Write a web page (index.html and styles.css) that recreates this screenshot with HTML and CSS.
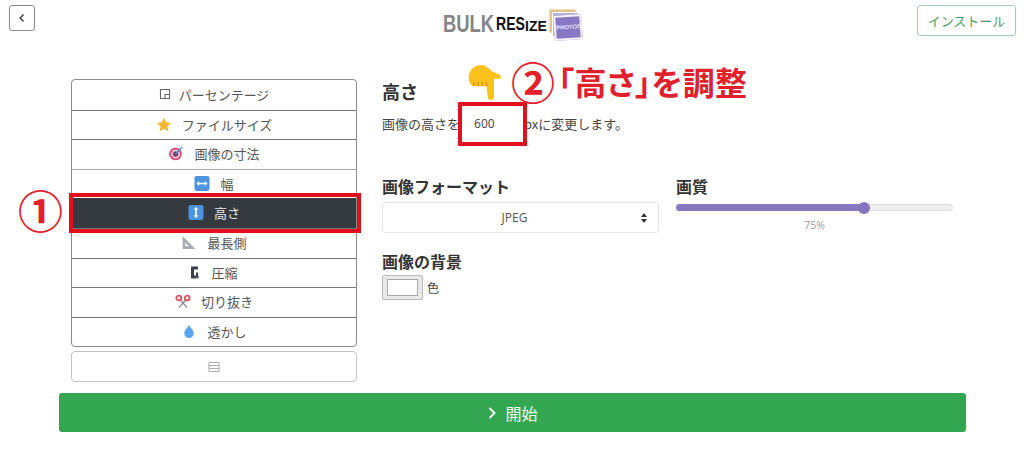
FILE: index.html
```html
<!DOCTYPE html>
<html lang="ja">
<head>
<meta charset="utf-8">
<title>Bulk Resize</title>
<link rel="stylesheet" href="styles.css">
</head>
<body>
<div class="page">
  <header class="topbar">
    <button class="back" aria-label="戻る"><svg width="10" height="12" viewBox="0 0 10 12"><path d="M6.500 2.500 3.200 6l3.300 3.500" fill="none" stroke="#444" stroke-width="1.500"/></svg></button>
    <div class="logo">
      <span class="logo-bulk">BULK</span><span class="logo-re">RES</span><span class="logo-ize">IZE</span>
      <span class="logo-stack"><span class="card c1"></span><span class="card c2"></span><span class="card c3">PHOTOS</span></span>
    </div>
    <button class="install">インストール</button>
  </header>

  <main class="main">
    <nav class="side">
      <ul class="menu">
        <li class="item"><svg class="ic ic-s" viewBox="0 0 12 12"><path d="M1.500 1.500h9v9h-9z M6 10.500V6.500h4.500" fill="none" stroke="#666" stroke-width="1.100"/></svg>パーセンテージ</li>
        <li class="item"><svg class="ic ic-w" viewBox="0 0 16 16"><path d="M8 .8l2.300 4.800 5.200.7-3.800 3.600 1 5.200L8 12.600l-4.700 2.500 1-5.200L.5 6.300l5.200-.7z" fill="#f0b630"/></svg>ファイルサイズ</li>
        <li class="item"><svg class="ic ic-w" viewBox="0 0 16 16"><circle cx="7.500" cy="8.500" r="6.800" fill="#d9557d"/><circle cx="7.500" cy="8.500" r="4.600" fill="#f6d5df"/><circle cx="7.500" cy="8.500" r="3" fill="#7a4a6e"/><path d="M8 8l5-5" stroke="#3d8fd8" stroke-width="1.400"/><path d="M11.500 3l3-2.500.5 2.500z" fill="#3d8fd8"/></svg>画像の寸法</li>
        <li class="item light"><svg class="ic ic-w" viewBox="0 0 14 14"><rect width="14" height="14" rx="2" fill="#4d94e0"/><path d="M1.800 7l2.500-2.300v1.500h5.400V4.700L12.200 7 9.700 9.300V7.800H4.300v1.500z" fill="#fff"/></svg>幅</li>
        <li class="item active"><svg class="ic ic-w" viewBox="0 0 14 14"><rect width="14" height="14" rx="2" fill="#4d94e0"/><path d="M7 1.800l2.300 2.500H7.800v5.400h1.500L7 12.200 4.700 9.700h1.500V4.300H4.700z" fill="#fff"/></svg>高さ</li>
        <li class="item"><svg class="ic ic-w" viewBox="0 0 14 14"><path d="M1 1l12 12H1z M3.500 7v3.500H7z" fill="#a8adb5" fill-rule="evenodd"/></svg>最長側</li>
        <li class="item"><svg class="ic ic-n" viewBox="0 0 10 14"><path d="M1 1h7v3H4v6h2v3H1z" fill="#3d4048"/><path d="M6 7h2v4h1.500L7 13.500 6 11z" fill="#3d4048"/></svg>圧縮</li>
        <li class="item"><svg class="ic ic-w" viewBox="0 0 16 14"><path d="M5 5l7 8M11 5l-7 8" stroke="#8a8f98" stroke-width="1.300"/><circle cx="3.800" cy="3.500" r="2.400" fill="none" stroke="#e05460" stroke-width="1.900"/><circle cx="12.200" cy="3.500" r="2.400" fill="none" stroke="#e05460" stroke-width="1.900"/></svg>切り抜き</li>
        <li class="item"><svg class="ic ic-w" viewBox="0 0 14 16"><path d="M7 1c2 3.500 5 5.500 5 9a5 5 0 0 1-10 0c0-3.500 3-5.500 5-9z" fill="#5aa5ec"/></svg>透かし</li>
      </ul>
      <button class="more"><svg width="12" height="12" viewBox="0 0 12 12"><path d="M1 1.500h10v9H1z M1 4.500h10 M1 7.500h10" fill="none" stroke="#aaa" stroke-width="1"/></svg></button>
    </nav>

    <section class="panel">
      <h2 class="title">高さ</h2>
      <div class="line">
        <span>画像の高さを</span><input class="num" value="600" aria-label="高さ"><span class="unit">pxに変更します。</span>
      </div>
      <div class="opts">
        <div class="opt">
          <h3 class="label">画像フォーマット</h3>
          <div class="select"><span>JPEG</span>
            <svg class="arrows" width="8" height="10" viewBox="0 0 8 10"><path d="M4 0l3 4H1zM4 10L1 6h6z" fill="#333"/></svg>
          </div>
        </div>
        <div class="opt">
          <h3 class="label">画質</h3>
          <div class="slider"><div class="fill"><span class="thumb"></span></div></div>
          <div class="pct">75%</div>
        </div>
      </div>
      <h3 class="label bg">画像の背景</h3>
      <div class="color"><span class="swatch"><span class="swatch-in"></span></span><span>色</span></div>
    </section>
  </main>

  <button class="start"><svg width="10" height="14" viewBox="0 0 10 14"><path d="M2.500 2l5 5-5 5" fill="none" stroke="#fff" stroke-width="1.800"/></svg>開始</button>

  <div class="mark mark-row"></div>
  <div class="mark mark-input"></div>
  <div class="note note-1">①</div>
  <div class="note note-2"><span class="circled">②</span><span class="phrase">「高さ」を調整</span></div>
  <svg class="hand" viewBox="0 0 34 34"><path d="M2 12C2 4 8 0 14 0c4 0 7 3 10 6l7 3c2 1 2 4 0 4h-5v17c0 4-6 4-6 0l-1-10H8c-4 0-6-4-6-8z" fill="#fcc21b"/><path d="M7 16v4M11 16v4M15 16v4M19 16v4" stroke="#c98a10" stroke-width="1"/></svg>
</div>
</body>
</html>
```
FILE: styles.css
```css
* { box-sizing: border-box; }
html, body { margin: 0; padding: 0; background: #fff; }
body {
  font-family: "Open Sans", "Noto Sans CJK JP", sans-serif;
  font-size: 13px;
  color: #444;
}
.page { position: relative; width: 1024px; height: 454px; overflow: hidden; }

.topbar {
  display: grid;
  grid-template-columns: 1fr auto 1fr;
  align-items: start;
  height: 79px;
  padding: 5px 8px 0 9px;
}
.back {
  width: 26px;
  height: 26px;
  padding: 0;
  display: flex;
  align-items: center;
  justify-content: center;
  background: #fff;
  border: 1px solid #8b8b8b;
  border-radius: 3px;
}
.install {
  justify-self: end;
  width: 99px;
  height: 31px;
  padding: 0;
  background: #fff;
  color: #4f9b68;
  border: 1px solid #a3cdb0;
  border-radius: 3px;
  font: 13px "Noto Sans CJK JP", sans-serif;
}
.logo {
  display: flex;
  align-items: center;
  width: 139px;
  height: 32px;
  margin-top: 3px;
  white-space: nowrap;
}
.logo-bulk, .logo-re { display: inline-block; transform-origin: left center; }
.logo-bulk { width: 53px; font: 900 23px/1 "Liberation Sans", sans-serif; color: #858585; transform: scaleX(.8); }
.logo-re { width: 29px; font: 700 18px/1 "Liberation Sans", sans-serif; color: #111; transform: scaleX(.78); }
.logo-ize { width: 21px; font: 700 14px/1 "Liberation Sans", sans-serif; color: #111; margin-top: 3px; }
.logo-stack { position: relative; display: block; width: 34px; height: 32px; margin-left: 2px; }
.card { position: absolute; display: block; }
.c1 { left: 1px; top: 1px; width: 27px; height: 24px; background: #e6c48e; border: 1px solid #f0dcb8; }
.c2 { left: 4px; top: 4px; width: 27px; height: 25px; background: #b5b5dc; border: 1px solid #fff; }
.c3 { left: 6px; top: 7px; width: 28px; height: 25px; background: #8878c4; border: 2px solid #f3f3f8; color: #e8e4f6; font: 700 6px/20px "Liberation Sans", sans-serif; text-align: center; overflow: hidden; transform: rotate(-4deg); }

.main { display: flex; align-items: flex-start; padding-left: 71px; height: 314px; }
.side { width: 286px; flex: none; }
.menu { list-style: none; margin: 0; padding: 0; border: 1px solid #8a8a8a; border-radius: 4px; overflow: hidden; }
.item {
  display: flex;
  align-items: center;
  justify-content: center;
  height: 29.600px;
  padding-bottom: 1px;
  border-top: 1px solid #777;
  color: #555;
  font-size: 13px;
  font-family: "Noto Sans CJK JP", sans-serif;
}
.item:first-child { border-top: 0; }
.item.light { border-top-color: #aaa; }
.item.active { background: #343a40; color: #e8e8e8; border-top: 0; }
.ic { flex: none; height: 15px; margin-right: 10px; }
.ic-s { width: 12px; height: 12px; margin-right: 8px; }
.ic-w { width: 16px; }
.ic-n { width: 10px; margin-right: 11px; }
.more {
  display: flex;
  align-items: center;
  justify-content: center;
  width: 100%;
  height: 31px;
  margin-top: 4px;
  padding: 0;
  background: #fff;
  border: 1px solid #c4c4c4;
  border-radius: 4px;
}

.panel { width: 571px; margin-left: 25px; font-family: "Noto Sans CJK JP", sans-serif; }
.title { margin: 0; font-size: 18px; line-height: 25px; font-weight: 700; color: #333; }
.line { display: flex; align-items: center; height: 38px; font-size: 13px; color: #444; }
.num {
  width: 65px;
  height: 34px;
  padding: 0 14px;
  border: 0;
  background: #fff;
  margin: 0;
  font: 12px "Open Sans", sans-serif;
  color: #444;
}
.unit { margin-left: -1px; }
.opts { display: grid; grid-template-columns: 277px 277px; column-gap: 17px; margin-top: 33px; }
.label { margin: 0; font-size: 16px; line-height: 22px; font-weight: 700; color: #333; }
.opt .label { margin-bottom: 5px; }
.select {
  position: relative;
  height: 31px;
  display: flex;
  align-items: center;
  justify-content: center;
  padding-right: 12px;
  border: 1px solid #e6e6e6;
  border-radius: 3px;
  font: 12px "Open Sans", sans-serif;
  color: #555;
}
.arrows { position: absolute; right: 10px; top: 10px; }
.slider { position: relative; height: 7px; margin-top: 7px; border: 1px solid #ddd; background: #eee; border-radius: 4px; }
.fill { position: relative; width: 188px; height: 7px; margin: -1px; background: #8878c0; border-radius: 4px; }
.thumb { position: absolute; right: -6px; top: -2px; width: 12px; height: 12px; border-radius: 50%; background: #8474bd; }
.pct { margin-top: 7px; text-align: center; font: 10.500px/14px "Open Sans", sans-serif; color: #999; }
.bg { margin-top: 17px; }
.color { display: flex; align-items: center; gap: 4px; margin-top: 3px; font-size: 12px; color: #444; }
.swatch { display: block; width: 41px; height: 25px; padding: 3px 4px; background: #e9e9e9; border: 1px solid #bbb; border-radius: 2px; }
.swatch-in { display: block; width: 100%; height: 100%; background: #fff; border: 1px solid #aaa; }

.start {
  display: flex;
  align-items: center;
  justify-content: center;
  gap: 8px;
  width: 907px;
  height: 39px;
  margin-left: 59px;
  padding: 0;
  background: #33a652;
  color: #f2fff5;
  border: 0;
  border-radius: 3px;
  font: 16px "Noto Sans CJK JP", sans-serif;
}

.mark { position: absolute; border: 4px solid #e2101e; }
.mark-row { left: 69px; top: 193px; width: 292px; height: 40px; }
.mark-input { left: 458px; top: 102px; width: 69px; height: 44px; }
.note { position: absolute; color: #e2202c; font-family: "Noto Sans CJK JP", sans-serif; font-weight: 700; white-space: nowrap; }
.note-1 { left: 18px; top: 184px; font-size: 45px; line-height: 52px; }
.note-2 { display: flex; align-items: center; left: 511px; top: 59px; height: 44px; }
.circled { font-size: 44px; line-height: 44px; }
.phrase { font-size: 32px; line-height: 44px; font-feature-settings: "palt"; letter-spacing: .4px; margin-left: 3px; }
.hand { position: absolute; left: 466px; top: 65px; width: 37px; height: 36px; }
```
